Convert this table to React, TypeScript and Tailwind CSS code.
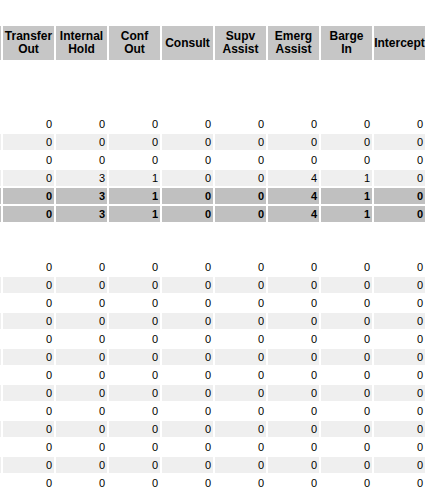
const HEADERS = [
  ['Transfer', 'Out'],
  ['Internal', 'Hold'],
  ['Conf', 'Out'],
  ['Consult'],
  ['Supv', 'Assist'],
  ['Emerg', 'Assist'],
  ['Barge', 'In'],
  ['Intercept'],
];

type Row = { values: number[]; kind: 'plain' | 'alt' | 'total' };

const zeros = [0, 0, 0, 0, 0, 0, 0, 0];
const busy = [0, 3, 1, 0, 0, 4, 1, 0];

const GROUP_A: Row[] = [
  { values: zeros, kind: 'plain' },
  { values: zeros, kind: 'alt' },
  { values: zeros, kind: 'plain' },
  { values: busy, kind: 'alt' },
  { values: busy, kind: 'total' },
  { values: busy, kind: 'total' },
];

const GROUP_B: Row[] = Array.from({ length: 13 }, (_, i) => ({
  values: zeros,
  kind: i % 2 === 0 ? 'plain' : 'alt',
}));

const rowBg = {
  plain: 'bg-white',
  alt: 'bg-[#efefef]',
  total: 'bg-[#c0c0c0] font-bold',
};

function DataRow({ row }: { row: Row }) {
  const bg = rowBg[row.kind];
  return (
    <div className="grid grid-cols-[1px_repeat(8,51px)] gap-x-[2px] h-4">
      <div className={bg} />
      {row.values.map((v, i) => (
        <div key={i} className={`${bg} flex items-center justify-end pr-[2px] text-[11px] leading-none`}>
          {v}
        </div>
      ))}
    </div>
  );
}

export default function App() {
  return (
    <div
      className="w-[428px] h-[493px] overflow-hidden bg-white text-black pt-[26px]"
      style={{ fontFamily: '"Liberation Sans", Arial, sans-serif' }}
    >
      <div className="flex flex-col gap-y-[2px]">
        {/* Header */}
        <div className="grid grid-cols-[1px_repeat(8,51px)] gap-x-[2px] h-[34px]">
          <div className="bg-[#c6c6c6]" />
          {HEADERS.map((lines, i) => (
            <div
              key={i}
              className="bg-[#c6c6c6] flex flex-col items-center justify-center text-[12px] font-bold leading-[13px] text-center"
            >
              {lines.map(l => (
                <span key={l}>{l}</span>
              ))}
            </div>
          ))}
        </div>

        <div className="h-4" />
        <div className="h-4" />
        <div className="h-4" />

        {GROUP_A.map((r, i) => (
          <DataRow key={`a${i}`} row={r} />
        ))}

        <div className="h-4" />
        <div className="h-[15px]" />

        {GROUP_B.map((r, i) => (
          <DataRow key={`b${i}`} row={r} />
        ))}
      </div>
    </div>
  );
}
